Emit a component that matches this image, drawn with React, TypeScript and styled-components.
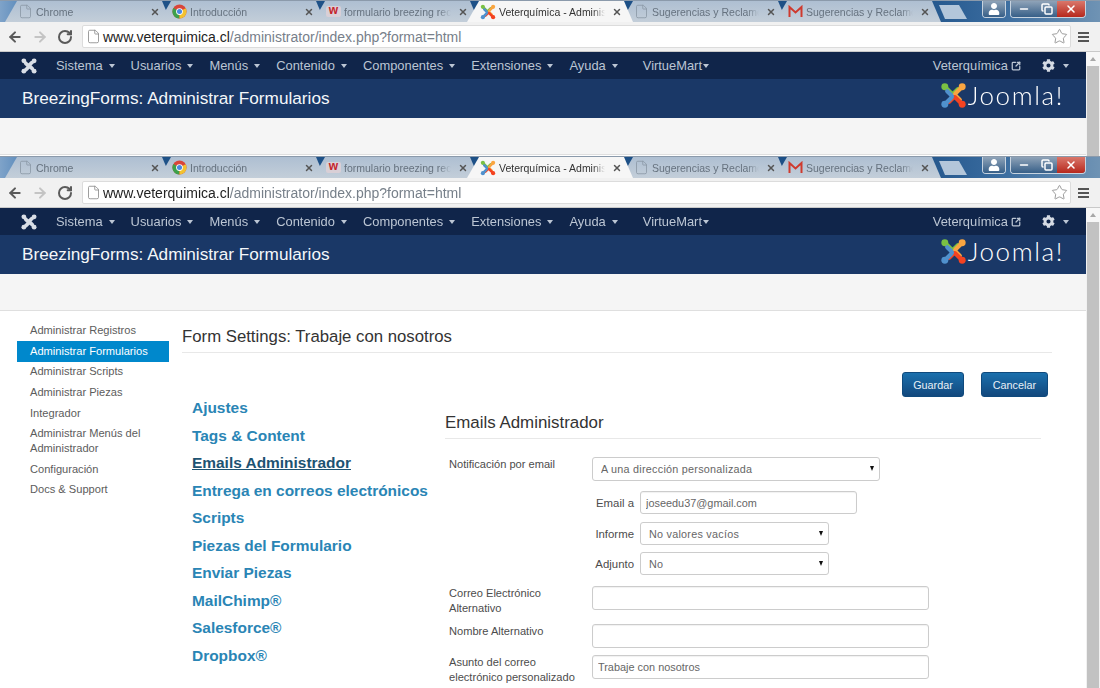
import React from "react";
import styled, { createGlobalStyle } from "styled-components";
import { ArrowLeft, ArrowRight, RotateCw, File, Star, Minus, Copy, X, SquareArrowOutUpRight } from "lucide-react";
import { FaCog, FaUser } from "react-icons/fa";

const GlobalStyle = createGlobalStyle`
  html, body { margin: 0; padding: 0; background: #fff; overflow: hidden; }
  * { box-sizing: border-box; }
  body { font-family: "Liberation Sans", Arial, sans-serif; }
`;

const Page = styled.div`
  width: 1100px;
  height: 688px;
  overflow: hidden;
  display: flex;
  flex-direction: column;
  filter: blur(0.3px);
`;

const Window = styled.section<{ $height: number }>`
  height: ${({ $height }) => $height}px;
  flex: none;
  overflow: hidden;
  display: flex;
  flex-direction: column;
`;

const TabStrip = styled.div`
  height: 22px;
  flex: none;
  display: flex;
  align-items: flex-end;
  padding-left: 5px;
  background: linear-gradient(90deg, #7fa3c9 0, #5d8cbc 20px, #1f5288 30px, #1c4f86 900px, #3a6c9f 1000px, #6f93b4 1100px);
  border-top: 1px solid #8b9aab;
`;

const Tab = styled.div<{ $active?: boolean }>`
  width: 166px;
  height: 21px;
  margin-right: -12px;
  padding: 0 11px 0 13px;
  flex: none;
  display: flex;
  align-items: center;
  gap: 3px;
  position: relative;
  z-index: ${({ $active }) => ($active ? 2 : 1)};
  clip-path: polygon(12px 0, 157px 0, 100% 100%, 0 100%);
  background: ${({ $active }) => ($active ? "#f6f6f6" : "linear-gradient(180deg, #aebfd2, #c3ced9)")};
  color: ${({ $active }) => ($active ? "#333" : "#66727f")};
  font-size: 10.5px;
`;

const TabLabel = styled.span`
  flex: 1;
  min-width: 0;
  overflow: hidden;
  white-space: nowrap;
  mask-image: linear-gradient(90deg, #000 calc(100% - 14px), transparent calc(100% - 2px));
`;

const TabClose = styled(X)`
  flex: none;
  width: 10px;
  height: 10px;
  margin-left: 2px;
  color: #555;
  stroke-width: 3.5;
`;

const PageFavicon = styled(File)`
  flex: none;
  width: 15px;
  height: 15px;
  color: #8a97a5;
  stroke-width: 1.3;
`;

const WebFavicon = styled.span`
  flex: none;
  width: 15px;
  height: 11px;
  border-radius: 2px;
  background: #d9cfd6;
  color: #c4232b;
  font-size: 12px;
  font-weight: 700;
  line-height: 8px;
  text-align: center;
`;

const NewTab = styled.div`
  width: 28px;
  height: 14px;
  margin: 0 0 3px 10px;
  flex: none;
  clip-path: polygon(0 0, 20px 0, 100% 100%, 6px 100%);
  background: #b3c6da;
`;

const WindowControls = styled.div`
  margin-left: 15px;
  height: 17px;
  align-self: flex-start;
  display: flex;
  gap: 4px;
`;

const ControlGroup = styled.div`
  display: flex;
  border: 1px solid #c7d3df;
  border-top: 0;
  border-radius: 0 0 4px 4px;
  overflow: hidden;
`;

const ControlButton = styled.div<{ $width: number; $danger?: boolean }>`
  width: ${({ $width }) => $width}px;
  display: flex;
  align-items: center;
  justify-content: center;
  color: #fff;
  background: ${({ $danger }) =>
    $danger ? "linear-gradient(180deg, #d9776b, #b7281d)" : "linear-gradient(180deg, #8fa3b8, #375f88)"};
  svg {
    width: 12px;
    height: 12px;
    stroke-width: 3;
  }
`;

const Toolbar = styled.div`
  height: 30px;
  flex: none;
  display: flex;
  align-items: center;
  padding: 0 7px 0 0;
  background: #f1f1f1;
  border-bottom: 1px solid #c9c9c9;
`;

const NavIcons = styled.div`
  width: 82px;
  flex: none;
  display: flex;
  align-items: center;
  gap: 9px;
  padding-left: 7px;
`;

const ToolIcon = styled.span<{ $muted?: boolean }>`
  display: flex;
  color: ${({ $muted }) => ($muted ? "#c4c4c4" : "#5a5a5a")};
  svg {
    width: 16px;
    height: 16px;
    stroke-width: 3;
  }
`;

const AddressBox = styled.div`
  width: 989px;
  height: 23px;
  flex: none;
  display: flex;
  align-items: center;
  gap: 2px;
  padding: 0 8px 0 3px;
  background: #fff;
  border: 1px solid #dcdcdc;
  border-radius: 2px;
  font-size: 14px;
  color: #222;
`;

const AddressPage = styled(File)`
  flex: none;
  width: 15px;
  height: 15px;
  color: #888;
  stroke-width: 1.3;
`;

const AddressPath = styled.span`
  color: #77808a;
`;

const AddressUrl = styled.span`
  flex: 1;
  white-space: nowrap;
`;

const BookmarkStar = styled(Star)`
  flex: none;
  width: 17px;
  height: 17px;
  margin-right: -6px;
  color: #8a8a8a;
  stroke-width: 1.2;
`;

const MenuBars = styled.div`
  width: 11px;
  height: 10px;
  margin-left: 7px;
  flex: none;
  border-top: 2px solid #555;
  border-bottom: 2px solid #555;
  position: relative;
  &::after {
    content: "";
    position: absolute;
    left: 0;
    right: 0;
    top: 2px;
    height: 2px;
    background: #555;
  }
`;

const Viewport = styled.div`
  flex: 1;
  min-height: 0;
  display: flex;
`;

const SitePane = styled.div`
  width: 1086px;
  flex: none;
  display: flex;
  flex-direction: column;
`;

const Scrollbar = styled.div`
  width: 14px;
  flex: none;
  display: flex;
  flex-direction: column;
  align-items: center;
  background: #f1f1f1;
`;

const ScrollArrow = styled.div`
  height: 14px;
  width: 100%;
  flex: none;
  display: flex;
  align-items: center;
  justify-content: center;
  background: #f7f7f7;
  &::after {
    content: "";
    border-left: 3px solid transparent;
    border-right: 3px solid transparent;
    border-bottom: 4px solid #a8a8a8;
  }
`;

const ScrollThumb = styled.div`
  width: 12px;
  flex: 1;
  background: #c2c2c2;
`;

const AdminNav = styled.nav`
  height: 27px;
  flex: none;
  display: flex;
  align-items: center;
  padding: 0 17px 0 21px;
  background: #10254a;
  color: #bcc6d4;
  font-size: 12.9px;
`;

const BrandMark = styled.div`
  width: 16px;
  height: 16px;
  margin-right: 19px;
  flex: none;
  display: flex;
`;

const NavMenu = styled.div`
  display: flex;
  align-items: center;
  gap: 16px;
`;

const NavItem = styled.span<{ $tight?: boolean }>`
  display: flex;
  align-items: center;
  white-space: nowrap;
  gap: ${({ $tight }) => ($tight ? 1 : 6)}px;
  margin-left: ${({ $tight }) => ($tight ? 9 : 0)}px;
`;

const Caret = styled.i`
  width: 0;
  height: 0;
  margin-top: 1px;
  border-left: 3.5px solid transparent;
  border-right: 3.5px solid transparent;
  border-top: 4px solid #bcc6d4;
`;

const NavRight = styled.div`
  margin-left: auto;
  display: flex;
  align-items: center;
  svg {
    flex: none;
  }
`;

const SiteLink = styled.span`
  display: flex;
  align-items: center;
  gap: 3px;
  margin-right: 21px;
`;

const GearMenu = styled.span`
  display: flex;
  align-items: center;
  gap: 8px;
  color: #d5dbe4;
`;

const TitleBar = styled.header`
  height: 39px;
  flex: none;
  display: flex;
  align-items: center;
  justify-content: space-between;
  padding: 0 22px;
  background: #1a3867;
  color: #f4f7fa;
  font-size: 17.2px;
`;

const JoomlaBrand = styled.div`
  display: flex;
  align-items: center;
  gap: 1px;
  margin-top: -7px;
`;

const JoomlaWord = styled.span`
  font-family: Lato, "Open Sans", sans-serif;
  font-weight: 300;
  font-size: 26px;
  letter-spacing: 1.6px;
  color: #fff;
`;

const SubBar = styled.div`
  height: 37px;
  flex: none;
  background: #f5f5f5;
  border-bottom: 1px solid #dfdfdf;
`;

const Body = styled.div`
  display: flex;
  background: #fff;
  padding-left: 17px;
  flex: 1;
  min-height: 0;
`;

const SideMenu = styled.ul`
  width: 152px;
  flex: none;
  list-style: none;
  margin: 0;
  padding: 9.5px 0 0;
`;

const SideItem = styled.li<{ $active?: boolean }>`
  padding: 2.8px 13px;
  line-height: 15px;
  font-size: 11.1px;
  color: ${({ $active }) => ($active ? "#fff" : "#5c5c5c")};
  background: ${({ $active }) => ($active ? "#0088cc" : "transparent")};
`;

const Main = styled.main`
  width: 870px;
  margin-left: 13px;
  flex: none;
`;

const PageHeading = styled.h1`
  margin: 16px 0 0;
  padding-bottom: 5px;
  border-bottom: 1px solid #e8e8e8;
  font-size: 16.75px;
  line-height: 20px;
  font-weight: 400;
  color: #333;
`;

const ActionRow = styled.div`
  margin: 19px 4px -3px 0;
  display: flex;
  justify-content: flex-end;
  gap: 17px;
`;

const ActionButton = styled.button<{ $pad: number }>`
  height: 25px;
  padding: 0 ${({ $pad }) => $pad}px;
  border: 1px solid #0f4a7d;
  border-radius: 3px;
  background: linear-gradient(180deg, #1b70ad, #12487d);
  color: #e8f0f7;
  font-family: inherit;
  font-size: 10.8px;
`;

const Columns = styled.div`
  display: flex;
`;

const FormNav = styled.div`
  width: 263px;
  flex: none;
  padding-left: 10px;
  display: flex;
  flex-direction: column;
  align-items: flex-start;
`;

const FormNavLink = styled.a<{ $current?: boolean }>`
  line-height: 27.5px;
  font-size: 15.45px;
  font-weight: 700;
  white-space: nowrap;
  color: ${({ $current }) => ($current ? "#1d5372" : "#2a85b5")};
  text-decoration: ${({ $current }) => ($current ? "underline" : "none")};
`;

const Panel = styled.div`
  width: 596px;
  flex: none;
`;

const PanelHeading = styled.h2`
  margin: 19px 0 18px;
  padding-bottom: 5px;
  border-bottom: 1px solid #e8e8e8;
  font-size: 16.9px;
  line-height: 20px;
  font-weight: 400;
  color: #333;
`;

const FormRow = styled.div<{ $top?: number }>`
  display: grid;
  grid-template-columns: 143px 1fr;
  padding-left: 4px;
  margin-top: ${({ $top }) => $top ?? 0}px;
`;

const FieldLabel = styled.label`
  font-size: 11.1px;
  line-height: 15px;
  color: #4c4c4c;
`;

const SubRow = styled.div<{ $top: number }>`
  display: grid;
  grid-template-columns: 42px 1fr;
  column-gap: 6px;
  align-items: center;
  margin-top: ${({ $top }) => $top}px;
`;

const SubLabel = styled.label`
  text-align: right;
  font-size: 11.4px;
  color: #4c4c4c;
`;

const TextInput = styled.input<{ $width: number; $height?: number }>`
  display: block;
  width: ${({ $width }) => $width}px;
  height: ${({ $height }) => $height ?? 24}px;
  padding: 0 5px;
  border: 1px solid #ccc;
  border-radius: 3px;
  box-shadow: inset 0 1px 1px rgba(0, 0, 0, 0.06);
  background: #fff;
  color: #666;
  font-family: inherit;
  font-size: 10.9px;
  outline: none;
`;

const SelectWrap = styled.div<{ $width: number; $height: number }>`
  position: relative;
  width: ${({ $width }) => $width}px;
  height: ${({ $height }) => $height}px;
  &::after {
    content: "";
    position: absolute;
    right: 6px;
    top: 9px;
    border-left: 2.5px solid transparent;
    border-right: 2.5px solid transparent;
    border-top: 5px solid #111;
  }
`;

const SelectBox = styled.select`
  appearance: none;
  display: block;
  width: 100%;
  height: 100%;
  padding: 0 8px;
  border: 1px solid #ccc;
  border-radius: 3px;
  background: #fff;
  color: #666;
  font-family: inherit;
  font-size: 10.8px;
  letter-spacing: 0.25px;
  outline: none;
`;

const JoomlaMark = ({ size, mono }: { size: number; mono?: boolean }) => {
  const colors = mono ? ["#d9dee6", "#d9dee6", "#d9dee6", "#d9dee6"] : ["#7ac143", "#f9a541", "#f44321", "#5091cd"];
  return (
    <svg width={size} height={size} viewBox="0 0 28 28" style={{ flex: "none" }}>
      {colors.map((color, i) => (
        <g key={i} transform={`rotate(${i * 90} 14 14)`}>
          <path
            d="M6 6 L11.5 11.5 Q13 13 14.5 11.5 L18.5 7.5"
            fill="none"
            stroke={color}
            strokeWidth={mono ? 5 : 4.4}
            strokeLinecap="round"
          />
          <circle cx="5" cy="5" r={mono ? 4.2 : 3.6} fill={color} />
        </g>
      ))}
    </svg>
  );
};

const ChromeIcon = () => (
  <svg width="15" height="15" viewBox="0 0 16 16" style={{ flex: "none" }}>
    <circle cx="8" cy="8" r="7.5" fill="#d9453a" />
    <path d="M8 8 L1.5 4.2 A7.5 7.5 0 0 0 8 15.5 Z" fill="#3da04a" />
    <path d="M8 8 L14.6 4.5 A7.5 7.5 0 0 1 8 15.5 Z" fill="#f2c230" />
    <circle cx="8" cy="8" r="3.6" fill="#fff" />
    <circle cx="8" cy="8" r="2.7" fill="#4a88e0" />
  </svg>
);

const GmailIcon = () => (
  <svg width="15" height="13" viewBox="0 0 15 13" style={{ flex: "none" }}>
    <path d="M1.5 12 V2 L7.5 7.5 L13.5 2 V12" fill="none" stroke="#cf3a2e" strokeWidth="2" />
  </svg>
);

const tabs = [
  { label: "Chrome", icon: <PageFavicon /> },
  { label: "Introducción", icon: <ChromeIcon /> },
  { label: "formulario breezing rec", icon: <WebFavicon>w</WebFavicon> },
  { label: "Veterquímica - Adminis", icon: <JoomlaMark size={16} />, active: true },
  { label: "Sugerencias y Reclamos", icon: <PageFavicon /> },
  { label: "Sugerencias y Reclamos", icon: <GmailIcon /> },
];

const navItems = ["Sistema", "Usuarios", "Menús", "Contenido", "Componentes", "Extensiones", "Ayuda"];

const sideItems = [
  "Administrar Registros",
  "Administrar Formularios",
  "Administrar Scripts",
  "Administrar Piezas",
  "Integrador",
  "Administrar Menús del Administrador",
  "Configuración",
  "Docs & Support",
];

const formLinks = [
  "Ajustes",
  "Tags & Content",
  "Emails Administrador",
  "Entrega en correos electrónicos",
  "Scripts",
  "Piezas del Formulario",
  "Enviar Piezas",
  "MailChimp®",
  "Salesforce®",
  "Dropbox®",
];

const BrowserChrome = () => (
  <>
    <TabStrip>
      {tabs.map((tab, i) => (
        <Tab key={i} $active={tab.active}>
          {tab.icon}
          <TabLabel>{tab.label}</TabLabel>
          <TabClose />
        </Tab>
      ))}
      <NewTab />
      <WindowControls>
        <ControlGroup>
          <ControlButton $width={22}>
            <FaUser size={9} />
          </ControlButton>
        </ControlGroup>
        <ControlGroup>
          <ControlButton $width={25}>
            <Minus />
          </ControlButton>
          <ControlButton $width={21}>
            <Copy />
          </ControlButton>
          <ControlButton $width={28} $danger>
            <X />
          </ControlButton>
        </ControlGroup>
      </WindowControls>
    </TabStrip>
    <Toolbar>
      <NavIcons>
        <ToolIcon>
          <ArrowLeft />
        </ToolIcon>
        <ToolIcon $muted>
          <ArrowRight />
        </ToolIcon>
        <ToolIcon>
          <RotateCw />
        </ToolIcon>
      </NavIcons>
      <AddressBox>
        <AddressPage />
        <AddressUrl>
          www.veterquimica.cl<AddressPath>/administrator/index.php?format=html</AddressPath>
        </AddressUrl>
        <BookmarkStar />
      </AddressBox>
      <MenuBars />
    </Toolbar>
  </>
);

const SiteHeader = () => (
  <>
    <AdminNav>
      <BrandMark>
        <JoomlaMark size={16} mono />
      </BrandMark>
      <NavMenu>
        {navItems.map((item) => (
          <NavItem key={item}>
            {item}
            <Caret />
          </NavItem>
        ))}
        <NavItem $tight>
          VirtueMart
          <Caret />
        </NavItem>
      </NavMenu>
      <NavRight>
        <SiteLink>
          Veterquímica
          <SquareArrowOutUpRight size={10} strokeWidth={3} />
        </SiteLink>
        <GearMenu>
          <FaCog size={13} />
          <Caret />
        </GearMenu>
      </NavRight>
    </AdminNav>
    <TitleBar>
      BreezingForms: Administrar Formularios
      <JoomlaBrand>
        <JoomlaMark size={27} />
        <JoomlaWord>Joomla!</JoomlaWord>
      </JoomlaBrand>
    </TitleBar>
    <SubBar />
  </>
);

const EmailSettings = () => (
  <Panel>
    <PanelHeading>Emails Administrador</PanelHeading>
    <FormRow>
      <FieldLabel>Notificación por email</FieldLabel>
      <div>
        <SelectWrap $width={288} $height={24}>
          <SelectBox defaultValue="custom">
            <option value="custom">A una dirección personalizada</option>
          </SelectBox>
        </SelectWrap>
        <SubRow $top={10}>
          <SubLabel>Email a</SubLabel>
          <TextInput $width={217} $height={23} defaultValue="joseedu37@gmail.com" />
        </SubRow>
        <SubRow $top={8}>
          <SubLabel>Informe</SubLabel>
          <SelectWrap $width={189} $height={23}>
            <SelectBox defaultValue="none">
              <option value="none">No valores vacíos</option>
            </SelectBox>
          </SelectWrap>
        </SubRow>
        <SubRow $top={7}>
          <SubLabel>Adjunto</SubLabel>
          <SelectWrap $width={189} $height={23}>
            <SelectBox defaultValue="no">
              <option value="no">No</option>
            </SelectBox>
          </SelectWrap>
        </SubRow>
      </div>
    </FormRow>
    <FormRow $top={11}>
      <FieldLabel>
        Correo Electrónico
        <br />
        Alternativo
      </FieldLabel>
      <TextInput $width={337} />
    </FormRow>
    <FormRow $top={8}>
      <FieldLabel>Nombre Alternativo</FieldLabel>
      <TextInput $width={337} />
    </FormRow>
    <FormRow $top={7}>
      <FieldLabel>
        Asunto del correo
        <br />
        electrónico personalizado
      </FieldLabel>
      <TextInput $width={337} defaultValue="Trabaje con nosotros" />
    </FormRow>
  </Panel>
);

const App = () => (
  <Page>
    <GlobalStyle />
    <Window $height={156}>
      <BrowserChrome />
      <Viewport>
        <SitePane>
          <SiteHeader />
        </SitePane>
        <Scrollbar>
          <ScrollArrow />
          <ScrollThumb />
        </Scrollbar>
      </Viewport>
    </Window>
    <Window $height={532}>
      <BrowserChrome />
      <Viewport>
        <SitePane>
          <SiteHeader />
          <Body>
            <SideMenu>
              {sideItems.map((item) => (
                <SideItem key={item} $active={item === "Administrar Formularios"}>
                  {item}
                </SideItem>
              ))}
            </SideMenu>
            <Main>
              <PageHeading>Form Settings: Trabaje con nosotros</PageHeading>
              <ActionRow>
                <ActionButton $pad={10}>Guardar</ActionButton>
                <ActionButton $pad={11}>Cancelar</ActionButton>
              </ActionRow>
              <Columns>
                <FormNav>
                  {formLinks.map((link) => (
                    <FormNavLink key={link} $current={link === "Emails Administrador"}>
                      {link}
                    </FormNavLink>
                  ))}
                </FormNav>
                <EmailSettings />
              </Columns>
            </Main>
          </Body>
        </SitePane>
        <Scrollbar>
          <ScrollArrow />
          <ScrollThumb />
        </Scrollbar>
      </Viewport>
    </Window>
  </Page>
);

export default App;
